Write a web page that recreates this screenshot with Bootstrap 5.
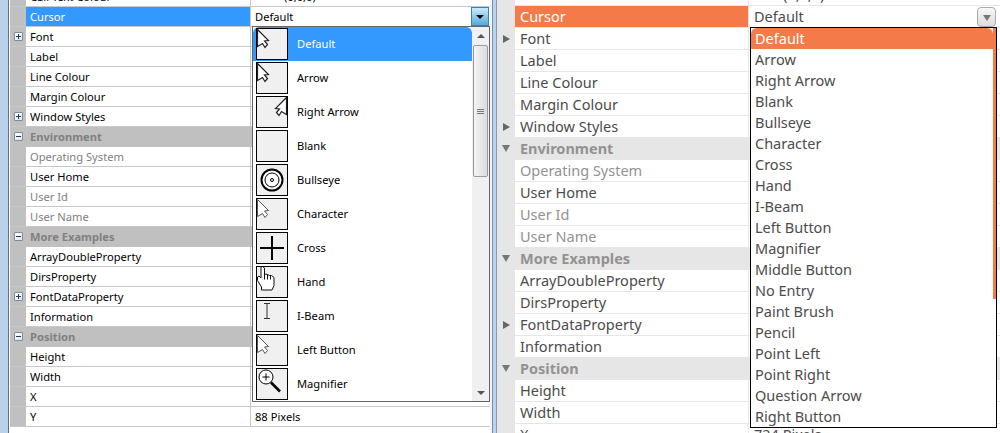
<!DOCTYPE html>
<html lang="en">
<head>
<meta charset="utf-8">
<title>Property grid</title>
<link href="https://cdn.jsdelivr.net/npm/bootstrap@5.3.0/dist/css/bootstrap.min.css" rel="stylesheet">
<style>
html,body{height:433px;overflow:hidden;background:#fff}
.shot{width:1000px;height:433px}
.pane{position:relative;overflow:hidden;height:433px}
.win{width:490px;font:11.15px/19px "Noto Sans",sans-serif;color:#000}
.gtk{width:510px;font:14.5px/21px "Noto Sans",sans-serif;color:#4c4c4c}
.edge-w{width:10px;flex:none;background:linear-gradient(90deg,#b9d1ea 0,#b9d1ea 8px,#5f7186 8px,#5f7186 9px,#fff 9px)}
.edge-g{width:7px;flex:none;background:linear-gradient(90deg,#f4f4f4 0,#f4f4f4 2px,#7b8ea3 2px,#7b8ea3 3px,#b7d5f2 3px,#b7d5f2 6px,#8c99a8 6px)}
.prow{display:flex;flex:none}
.win .prow{height:20px;border-bottom:1px solid #c8c8c8}
.gtk .prow{height:22px;border-bottom:1px solid #e6e6e6}
.win .prow.part{height:7px}
.gtk .prow.part{height:6px}
.part{align-items:flex-end;overflow:hidden}
.part>*{align-self:flex-end}
.gut{flex:none;display:flex;align-items:center;justify-content:center;height:100%}
.win .gut{width:16px;background:#c0c0c0}
.gtk .gut{width:18px;background:#e6e6e6}
.pname{flex:none;white-space:nowrap}
.win .pname{width:225px;padding-left:4px;border-right:1px solid #c8c8c8}
.gtk .pname{width:234px;padding-left:5px;border-right:1px solid #e6e6e6}
.pval{flex:1;white-space:nowrap;display:flex;align-items:center;min-width:0}
.win .pval{padding-left:4px}
.gtk .pval{padding-left:5px}
.off{color:#808080}
.gtk .off{color:#929292}
.grp{font-weight:700;color:#808080}
.win .grp{background:#c0c0c0;border-bottom-color:#c0c0c0!important}
.gtk .grp{background:#e6e6e6;color:#929292;border-bottom-color:#e6e6e6!important}
.grp .pname{border-right-color:transparent}
.sel-w .pname{background:#3399ff;color:#fff}
.sel-g .pname{background:#f47a4a;color:#fff}
.pm{width:9px;height:9px;border:1px solid #7f8c99;background:linear-gradient(135deg,#fff,#dfe3e8);position:relative;border-radius:1px}
.pm::before{content:"";position:absolute;left:1px;right:1px;top:3px;height:1px;background:#1f3d66}
.pm.plus::after{content:"";position:absolute;top:1px;bottom:1px;left:3px;width:1px;background:#1f3d66}
.tri-r{width:0;height:0;border-left:7px solid #666;border-top:4px solid transparent;border-bottom:4px solid transparent}
.tri-d{width:0;height:0;border-top:7px solid #777;border-left:4px solid transparent;border-right:4px solid transparent}
.swatch{display:block;width:20px;height:5px;margin-right:9px}
.win .swatch{background:#000}
.gtk .swatch{background:#4c4c4c;height:4px}
.combo-w{position:absolute;right:1px;top:7px;width:18px;height:19px;border:1px solid #3c7fb1;background:linear-gradient(#c9ecfd,#5aa9da);display:flex;align-items:center;justify-content:center}
.combo-w i{border-top:4px solid #000;border-left:4px solid transparent;border-right:4px solid transparent}
.combo-g{position:absolute;right:4px;top:7px;width:19px;height:20px;border:1px solid #a9a9a9;border-radius:4px;background:linear-gradient(#f8f8f8,#dcdcdc);display:flex;align-items:center;justify-content:center}
.combo-g i{border-top:6px solid #777;border-left:4px solid transparent;border-right:4px solid transparent;margin-top:2px}
.drop{position:absolute;display:flex;background:#fff}
.drop-w{left:252px;top:26px;width:238px;height:376px;border:1px solid #646464}
.drop-g{left:260px;top:27px;width:247px;height:401px;border:1px solid #000}
.opts{flex:1;min-width:0;overflow:hidden;background:#fff}
.opts .list-group-item{border:0;border-radius:0;background:transparent;color:inherit;margin:0}
.drop-w .list-group-item{height:34px;padding:1px 0 1px 3px;display:flex;align-items:flex-start}
.drop-w .item-label{line-height:31px}
.drop-w .list-group-item.active{background:#3399ff;color:#fff}
.drop-g .list-group-item{height:21px;padding:0 0 0 4px;line-height:21px}
.drop-g .list-group-item.active{background:#f47a4a;color:#fff}
.ico{flex:none;display:block;width:32px;height:32px;margin-right:9px;background:#f0f0f0;border:1px solid #000;overflow:hidden}
.sbar{flex:none;width:17px;background:#f0f0f0;display:flex;flex-direction:column;align-items:center}
.sbtn{height:17px;flex:none;display:flex;align-items:center;justify-content:center}
.sbtn i{border-left:4px solid transparent;border-right:4px solid transparent}
.sbtn .up{border-bottom:4px solid #555}
.sbtn .dn{border-top:4px solid #555}
.strack{flex:1;width:100%;display:flex;flex-direction:column}
.sthumb{margin:1px 0 0 1px;width:15px;height:132px;border:1px solid #9a9a9a;border-radius:2px;background:linear-gradient(90deg,#f4f4f4,#dcdcdc);display:flex;flex-direction:column;align-items:center;justify-content:center;gap:1px}
.sthumb b{display:block;width:7px;height:1px;background:#777}
.gbar{flex:none;width:3px;margin-top:0}
.gbar b{display:block;height:271px;background:#f47a4a}
</style>
</head>
<body>
<svg width="0" height="0" class="d-block position-absolute">
<defs>
<path id="arw" d="M.5.5 11.5 11.5 7.5 12 10.5 15.5 8 18.5 5.5 14.5.5 17.5Z"/>
</defs>
</svg>
<div class="d-flex shot">

<div class="pane win d-flex">
 <div class="edge-w"></div>
 <div class="flex-grow-1 d-flex flex-column">
  <div class="prow part"><div class="gut"></div><div class="pname">Call Text Colour</div><div class="pval"><span class="swatch"></span>(0,0,0)</div></div>
  <div class="prow sel-w"><div class="gut"></div><div class="pname">Cursor</div><div class="pval">Default</div></div>
  <div class="prow"><div class="gut"><span class="pm plus"></span></div><div class="pname">Font</div><div class="pval"></div></div>
  <div class="prow"><div class="gut"></div><div class="pname">Label</div><div class="pval"></div></div>
  <div class="prow"><div class="gut"></div><div class="pname">Line Colour</div><div class="pval"></div></div>
  <div class="prow"><div class="gut"></div><div class="pname">Margin Colour</div><div class="pval"></div></div>
  <div class="prow"><div class="gut"><span class="pm plus"></span></div><div class="pname">Window Styles</div><div class="pval"></div></div>
  <div class="prow grp"><div class="gut"><span class="pm"></span></div><div class="pname">Environment</div><div class="pval"></div></div>
  <div class="prow off"><div class="gut"></div><div class="pname">Operating System</div><div class="pval"></div></div>
  <div class="prow"><div class="gut"></div><div class="pname">User Home</div><div class="pval"></div></div>
  <div class="prow off"><div class="gut"></div><div class="pname">User Id</div><div class="pval"></div></div>
  <div class="prow off"><div class="gut"></div><div class="pname">User Name</div><div class="pval"></div></div>
  <div class="prow grp"><div class="gut"><span class="pm"></span></div><div class="pname">More Examples</div><div class="pval"></div></div>
  <div class="prow"><div class="gut"></div><div class="pname">ArrayDoubleProperty</div><div class="pval"></div></div>
  <div class="prow"><div class="gut"></div><div class="pname">DirsProperty</div><div class="pval"></div></div>
  <div class="prow"><div class="gut"><span class="pm plus"></span></div><div class="pname">FontDataProperty</div><div class="pval"></div></div>
  <div class="prow"><div class="gut"></div><div class="pname">Information</div><div class="pval"></div></div>
  <div class="prow grp"><div class="gut"><span class="pm"></span></div><div class="pname">Position</div><div class="pval"></div></div>
  <div class="prow"><div class="gut"></div><div class="pname">Height</div><div class="pval"></div></div>
  <div class="prow"><div class="gut"></div><div class="pname">Width</div><div class="pval"></div></div>
  <div class="prow"><div class="gut"></div><div class="pname">X</div><div class="pval"></div></div>
  <div class="prow"><div class="gut"></div><div class="pname">Y</div><div class="pval">88 Pixels</div></div>
 </div>
 <div class="combo-w"><i></i></div>
 <div class="drop drop-w">
  <div class="opts list-group">
   <div class="list-group-item active"><svg class="ico" viewBox="1 1 30 30"><use href="#arw" fill="#fff" stroke="#222" stroke-width="1.2" transform="translate(1 1)"/></svg><span class="item-label">Default</span></div>
   <div class="list-group-item"><svg class="ico" viewBox="1 1 30 30"><use href="#arw" fill="#fff" stroke="#222" stroke-width="1.2" transform="translate(1 1)"/></svg><span class="item-label">Arrow</span></div>
   <div class="list-group-item"><svg class="ico" viewBox="1 1 30 30"><use href="#arw" fill="#fff" stroke="#222" stroke-width="1.2" transform="translate(31 1) scale(-1 1)"/></svg><span class="item-label">Right Arrow</span></div>
   <div class="list-group-item"><svg class="ico" viewBox="1 1 30 30"></svg><span class="item-label">Blank</span></div>
   <div class="list-group-item"><svg class="ico" viewBox="1 1 30 30"><circle cx="16" cy="16" r="10.5" fill="#fff" stroke="#000" stroke-width="2"/><circle cx="16" cy="16" r="7" fill="none" stroke="#000"/><circle cx="16" cy="16" r="1.5" fill="none" stroke="#000"/></svg><span class="item-label">Bullseye</span></div>
   <div class="list-group-item"><svg class="ico" viewBox="1 1 30 30"><use href="#arw" fill="#fff" stroke="#555" transform="translate(1 1)"/></svg><span class="item-label">Character</span></div>
   <div class="list-group-item"><svg class="ico" viewBox="1 1 30 30"><path d="M16 4V28M4 16H28" stroke="#000" stroke-width="2"/></svg><span class="item-label">Cross</span></div>
   <div class="list-group-item"><svg class="ico" viewBox="1 1 30 30"><path d="M5 1V12L3 10 1.5 11V14.5L5.5 21V24H16L18 19.5V11.5L15.5 9.5 13.5 9.5 11.5 8.5 8.5 8V2L6.5.5Z" fill="#fff" stroke="#111"/><path d="M8.5 8V13.5M11.5 8.5V13.5M14.5 9.5V13.5" stroke="#111" fill="none"/></svg><span class="item-label">Hand</span></div>
   <div class="list-group-item"><svg class="ico" viewBox="1 1 30 30"><path d="M8 3.5H14M11 3.5V18.5M8 18.5H14" stroke="#333" fill="none"/></svg><span class="item-label">I-Beam</span></div>
   <div class="list-group-item"><svg class="ico" viewBox="1 1 30 30"><use href="#arw" fill="#fff" stroke="#555" transform="translate(1 1)"/></svg><span class="item-label">Left Button</span></div>
   <div class="list-group-item"><svg class="ico" viewBox="1 1 30 30"><circle cx="10" cy="9" r="7" fill="#fff" stroke="#000"/><path d="M6.5 9H13.5M10 5.5V12.5" stroke="#000"/><path d="M15 14.5 24 23.5" stroke="#000" stroke-width="2.6"/></svg><span class="item-label">Magnifier</span></div>
  </div>
  <div class="sbar">
   <div class="sbtn"><i class="up"></i></div>
   <div class="strack"><div class="sthumb"><b></b><b></b><b></b></div></div>
   <div class="sbtn"><i class="dn"></i></div>
  </div>
 </div>
</div>

<div class="pane gtk d-flex">
 <div class="edge-g"></div>
 <div class="flex-grow-1 d-flex flex-column">
  <div class="prow part"><div class="gut"></div><div class="pname">Call Text Colour</div><div class="pval"><span class="swatch"></span>(0,0,0)</div></div>
  <div class="prow sel-g"><div class="gut"></div><div class="pname">Cursor</div><div class="pval">Default</div></div>
  <div class="prow"><div class="gut"><span class="tri-r"></span></div><div class="pname">Font</div><div class="pval"></div></div>
  <div class="prow"><div class="gut"></div><div class="pname">Label</div><div class="pval"></div></div>
  <div class="prow"><div class="gut"></div><div class="pname">Line Colour</div><div class="pval"></div></div>
  <div class="prow"><div class="gut"></div><div class="pname">Margin Colour</div><div class="pval"></div></div>
  <div class="prow"><div class="gut"><span class="tri-r"></span></div><div class="pname">Window Styles</div><div class="pval"></div></div>
  <div class="prow grp"><div class="gut"><span class="tri-d"></span></div><div class="pname">Environment</div><div class="pval"></div></div>
  <div class="prow off"><div class="gut"></div><div class="pname">Operating System</div><div class="pval"></div></div>
  <div class="prow"><div class="gut"></div><div class="pname">User Home</div><div class="pval"></div></div>
  <div class="prow off"><div class="gut"></div><div class="pname">User Id</div><div class="pval"></div></div>
  <div class="prow off"><div class="gut"></div><div class="pname">User Name</div><div class="pval"></div></div>
  <div class="prow grp"><div class="gut"><span class="tri-d"></span></div><div class="pname">More Examples</div><div class="pval"></div></div>
  <div class="prow"><div class="gut"></div><div class="pname">ArrayDoubleProperty</div><div class="pval"></div></div>
  <div class="prow"><div class="gut"></div><div class="pname">DirsProperty</div><div class="pval"></div></div>
  <div class="prow"><div class="gut"><span class="tri-r"></span></div><div class="pname">FontDataProperty</div><div class="pval"></div></div>
  <div class="prow"><div class="gut"></div><div class="pname">Information</div><div class="pval"></div></div>
  <div class="prow grp"><div class="gut"><span class="tri-d"></span></div><div class="pname">Position</div><div class="pval"></div></div>
  <div class="prow"><div class="gut"></div><div class="pname">Height</div><div class="pval"></div></div>
  <div class="prow"><div class="gut"></div><div class="pname">Width</div><div class="pval"></div></div>
  <div class="prow"><div class="gut"></div><div class="pname">X</div><div class="pval">724 Pixels</div></div>
 </div>
 <div class="combo-g"><i></i></div>
 <div class="drop drop-g">
  <div class="opts list-group">
   <div class="list-group-item active">Default</div>
   <div class="list-group-item">Arrow</div>
   <div class="list-group-item">Right Arrow</div>
   <div class="list-group-item">Blank</div>
   <div class="list-group-item">Bullseye</div>
   <div class="list-group-item">Character</div>
   <div class="list-group-item">Cross</div>
   <div class="list-group-item">Hand</div>
   <div class="list-group-item">I-Beam</div>
   <div class="list-group-item">Left Button</div>
   <div class="list-group-item">Magnifier</div>
   <div class="list-group-item">Middle Button</div>
   <div class="list-group-item">No Entry</div>
   <div class="list-group-item">Paint Brush</div>
   <div class="list-group-item">Pencil</div>
   <div class="list-group-item">Point Left</div>
   <div class="list-group-item">Point Right</div>
   <div class="list-group-item">Question Arrow</div>
   <div class="list-group-item">Right Button</div>
  </div>
  <div class="gbar"><b></b></div>
 </div>
</div>

</div>
<script src="https://cdn.jsdelivr.net/npm/bootstrap@5.3.0/dist/js/bootstrap.bundle.min.js"></script>
</body>
</html>
